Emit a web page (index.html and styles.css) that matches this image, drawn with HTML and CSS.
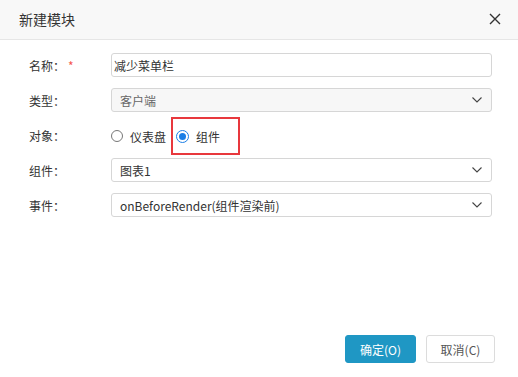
FILE: index.html
```html
<!DOCTYPE html>
<html lang="zh-CN">
<head>
  <meta charset="UTF-8" />
  <title>新建模块</title>
  <link rel="stylesheet" href="styles.css">
</head>
<body>
  <div class="dialog">
    <div class="dialog-header">
      <span class="dialog-title">新建模块</span>
      <span class="close-btn">
        <svg width="12" height="12" viewBox="0 0 12 12"><path d="M1 1L11 11M11 1L1 11" stroke="#333" stroke-width="1.4" fill="none"/></svg>
      </span>
    </div>
    <div class="dialog-body">
      <div class="form-row">
        <label class="form-label">名称：<span class="required">*</span></label>
        <input class="text-input" type="text" value="减少菜单栏">
      </div>
      <div class="form-row">
        <label class="form-label">类型：</label>
        <div class="select disabled"><span>客户端</span><svg class="chevron" width="10" height="6" viewBox="0 0 10 6"><path d="M0.5 0.5L5 5L9.5 0.5" stroke="#444" stroke-width="1.1" fill="none"/></svg></div>
      </div>
      <div class="form-row">
        <label class="form-label">对象：</label>
        <div class="radio-group">
          <span class="radio-item"><span class="radio"></span>仪表盘</span>
          <span class="radio-item marked"><span class="radio checked"></span>组件</span>
        </div>
      </div>
      <div class="form-row">
        <label class="form-label">组件：</label>
        <div class="select"><span>图表1</span><svg class="chevron" width="10" height="6" viewBox="0 0 10 6"><path d="M0.5 0.5L5 5L9.5 0.5" stroke="#444" stroke-width="1.1" fill="none"/></svg></div>
      </div>
      <div class="form-row">
        <label class="form-label">事件：</label>
        <div class="select"><span>onBeforeRender(组件渲染前)</span><svg class="chevron" width="10" height="6" viewBox="0 0 10 6"><path d="M0.5 0.5L5 5L9.5 0.5" stroke="#444" stroke-width="1.1" fill="none"/></svg></div>
      </div>
    </div>
    <div class="dialog-footer">
      <button class="btn btn-primary">确定(O)</button>
      <button class="btn btn-default">取消(C)</button>
    </div>
  </div>
</body>
</html>
```

FILE: styles.css
```css
* { margin: 0; padding: 0; box-sizing: border-box; }
body {
  font-family: "Noto Sans CJK SC", "Noto Sans", sans-serif;
  font-size: 12px;
  color: #333;
  background: #fff;
}
.dialog {
  width: 518px;
  height: 377px;
  display: flex;
  flex-direction: column;
}
.dialog-header {
  height: 40px;
  background: #f8f8f8;
  border-bottom: 1px solid #e6e6e6;
  display: flex;
  align-items: center;
  justify-content: space-between;
  padding: 0 17px 2px 19px;
}
.dialog-title {
  font-size: 14px;
  color: #333;
}
.close-btn {
  display: flex;
  cursor: pointer;
}
.dialog-body {
  padding: 13px 26px 0 29px;
  display: flex;
  flex-direction: column;
  gap: 11px;
}
.form-row {
  display: flex;
  align-items: center;
  height: 24px;
}
.form-label {
  width: 82px;
  flex-shrink: 0;
  color: #333;
}
.required {
  color: #f5564e;
  margin-left: 3px;
}
.text-input, .select {
  flex: 1;
  height: 24px;
  border: 1px solid #d6d6d6;
  border-radius: 3px;
  font-family: inherit;
  font-size: 12px;
  color: #333;
  background: #fff;
}
.text-input {
  padding: 0 2px;
  outline: none;
}
.select {
  display: flex;
  align-items: center;
  justify-content: space-between;
  padding: 0 9px 0 8px;
}
.select.disabled {
  background: #f7f7f7;
  color: #666;
}
.chevron {
  display: block;
}
.radio-group {
  display: flex;
  gap: 10px;
  margin-top: 2px;
}
.radio-item {
  display: flex;
  align-items: center;
  gap: 7px;
  position: relative;
}
.radio {
  width: 12px;
  height: 12px;
  border: 1px solid #777;
  border-radius: 50%;
  background: #fff;
}
.radio.checked {
  width: 13px;
  height: 13px;
  border: 1.5px solid #1a7ee6;
  display: flex;
  align-items: center;
  justify-content: center;
}
.radio.checked::after {
  content: "";
  width: 7px;
  height: 7px;
  border-radius: 50%;
  background: #1a7ee6;
}
/* annotation box */
.radio-item.marked::before {
  content: "";
  position: absolute;
  left: -5px;
  top: 50%;
  transform: translateY(-50%);
  width: 65px;
  height: 34px;
  border: 2px solid #e8383d;
  pointer-events: none;
}
.dialog-footer {
  margin-top: auto;
  display: flex;
  justify-content: flex-end;
  gap: 10px;
  padding: 0 23px 14px 0;
}
.btn {
  height: 28px;
  border-radius: 3px;
  font-family: inherit;
  font-size: 12px;
  cursor: pointer;
}
.btn-primary {
  width: 71px;
  background: #1f97c4;
  border: 1px solid #1f97c4;
  color: #fff;
}
.btn-default {
  width: 69px;
  background: #fff;
  border: 1px solid #dcdcdc;
  color: #555;
}
```
